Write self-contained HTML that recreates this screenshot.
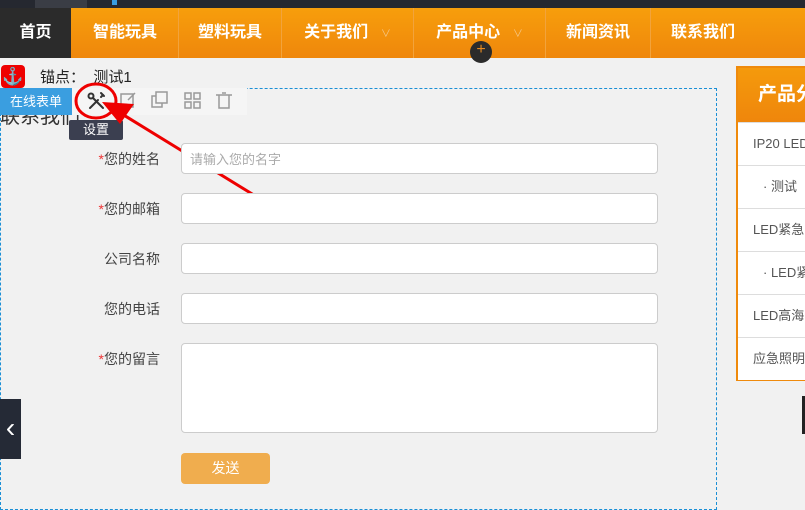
<!DOCTYPE html>
<html><head><meta charset="utf-8"><style>
body{margin:0;width:805px;height:491px;overflow:hidden;background:#f1f1f1;font-family:"Liberation Sans","Noto Sans CJK SC",sans-serif;position:relative}
.a{position:absolute}
.nav{left:0;top:8px;width:805px;height:50px;background:linear-gradient(#f79e0c,#ef870c)}
.ni{position:absolute;top:0;height:50px;line-height:50px;color:#fff;font-size:16px;font-weight:bold;text-align:center;border-right:1px solid #f2a33c}
.inp{position:absolute;left:181px;width:475px;height:29px;background:#fff;border:1px solid #ccc;border-radius:4px}
.lbl{position:absolute;width:160px;left:0;text-align:right;font-size:14px;color:#444}
.lbl i{color:#e33;font-style:normal}
.row{position:absolute;left:738px;width:67px;height:42px;line-height:42px;border-top:1px solid #ddd;background:#fff;font-size:13px;color:#555;white-space:nowrap;overflow:hidden}
</style></head><body>
<div class="a" style="left:0;top:0;width:805px;height:8px;background:#252830"></div>
<div class="a" style="left:35px;top:0;width:52px;height:8px;background:#3a3d45"></div>
<div class="a" style="left:112px;top:0;width:5px;height:5px;background:#3a9de0"></div>
<div class="a nav">
<div class="ni" style="left:0;width:71px;background:#2b2b2b;border:none">首页</div>
<div class="ni" style="left:72px;width:106px">智能玩具</div>
<div class="ni" style="left:179px;width:102px">塑料玩具</div>
<div class="ni" style="left:282px;width:131px">关于我们 <span style="font-size:10px;color:#f5c88a;font-weight:normal">&nbsp;&nbsp;&nbsp;∨</span></div>
<div class="ni" style="left:414px;width:131px">产品中心 <span style="font-size:10px;color:#f5c88a;font-weight:normal">&nbsp;&nbsp;&nbsp;∨</span></div>
<div class="ni" style="left:546px;width:104px">新闻资讯</div>
<div class="ni" style="left:651px;width:104px;border:none">联系我们</div>
</div>
<div class="a" style="left:470px;top:41px;width:22px;height:22px;border-radius:50%;background:#2b2b2b;color:#e58a20;text-align:center;line-height:18px;font-size:16px">+</div>
<div class="a" style="left:0;top:88px;width:715px;height:420px;border:1px dashed #1a8fd6"></div>
<div class="a" style="left:1px;top:65px;width:24px;height:23px;background:#e00;border-radius:4px;color:#222;text-align:center;font-size:17px;line-height:23px">⚓</div>
<div class="a" style="left:40px;top:66px;font-size:15px;color:#222">锚点：&nbsp;&nbsp;测试1</div>
<div class="a" style="left:0;top:100px;font-size:20px;color:#333;clip-path:inset(14px 0 0 0)">联系我们</div>
<div class="a" style="left:0;top:88px;width:72px;height:27px;background:#3a9ee0;color:#fff;font-size:13px;line-height:27px;text-align:center">在线表单</div>
<div class="a" style="left:72px;top:88px;width:175px;height:27px;background:#f5f5f5"></div>
<div class="a" style="left:69px;top:120px;width:54px;height:20px;background:#3b3f50;border-radius:2px;color:#fff;font-size:13px;line-height:20px;text-align:center">设置</div>
<svg class="a" style="left:0;top:0" width="805" height="491">
<g stroke="#333" stroke-width="2" fill="none" stroke-linecap="round"><path d="M90 108l8-8M101 97l2-2"/><circle cx="91" cy="96" r="2.5"/><path d="M93 98l10 10"/><path d="M101 93l3 3"/></g>
<g stroke="#999" stroke-width="1.5" fill="none">
<rect x="121" y="94" width="12" height="13"/><path d="M128 100l7-7"/>
<rect x="152" y="96" width="10" height="11"/><rect x="156" y="92" width="11" height="11" fill="#f5f5f5"/>
<rect x="185" y="93" width="6" height="6"/><rect x="194" y="93" width="6" height="6"/><rect x="185" y="102" width="6" height="6"/><rect x="194" y="102" width="6" height="6"/>
<path d="M216 95h16M219 95v13h10v-13M222 93h4"/></g>
<ellipse cx="96" cy="101" rx="20" ry="17" stroke="#e00" stroke-width="3" fill="none"/>
<path d="M262 200L122 114" stroke="#e00" stroke-width="3"/>
<path d="M102 102L134 104L120 124Z" fill="#e00"/>
</svg>
<div class="lbl" style="top:149px"><i>*</i>您的姓名</div>
<div class="inp" style="top:143px"></div>
<div class="a" style="left:190px;top:149px;font-size:13px;color:#aaa">请输入您的名字</div>
<div class="lbl" style="top:199px"><i>*</i>您的邮箱</div><div class="inp" style="top:193px"></div>
<div class="lbl" style="top:249px">公司名称</div><div class="inp" style="top:243px"></div>
<div class="lbl" style="top:299px">您的电话</div><div class="inp" style="top:293px"></div>
<div class="lbl" style="top:349px"><i>*</i>您的留言</div><div class="inp" style="top:343px;height:88px"></div>
<div class="a" style="left:181px;top:453px;width:89px;height:31px;background:#f0ad4e;border-radius:4px;color:#fff;font-size:14px;line-height:31px;text-align:center">发送</div>
<div class="a" style="left:0;top:399px;width:21px;height:60px;background:#252a36;color:#fff;font-size:28px;line-height:58px;text-align:center">‹</div>
<div class="a" style="left:736px;top:66px;width:72px;height:315px;background:#ef8a0c"></div>
<div class="a" style="left:738px;top:68px;width:67px;height:54px;background:linear-gradient(#f59a0c,#ef860c);color:#fff;font-size:19px;font-weight:bold;line-height:54px;padding-left:20px;box-sizing:border-box;white-space:nowrap;overflow:hidden">产品分类</div>
<div class="row" style="top:122px;text-indent:15px">IP20 LED</div>
<div class="row" style="top:165px;text-indent:25px">· 测试</div>
<div class="row" style="top:208px;text-indent:15px">LED紧急</div>
<div class="row" style="top:251px;text-indent:25px">· LED紧</div>
<div class="row" style="top:294px;text-indent:15px">LED高海</div>
<div class="row" style="top:337px;height:42px;text-indent:15px">应急照明</div>
<div class="a" style="left:802px;top:396px;width:3px;height:38px;background:#222"></div>
</body></html>
